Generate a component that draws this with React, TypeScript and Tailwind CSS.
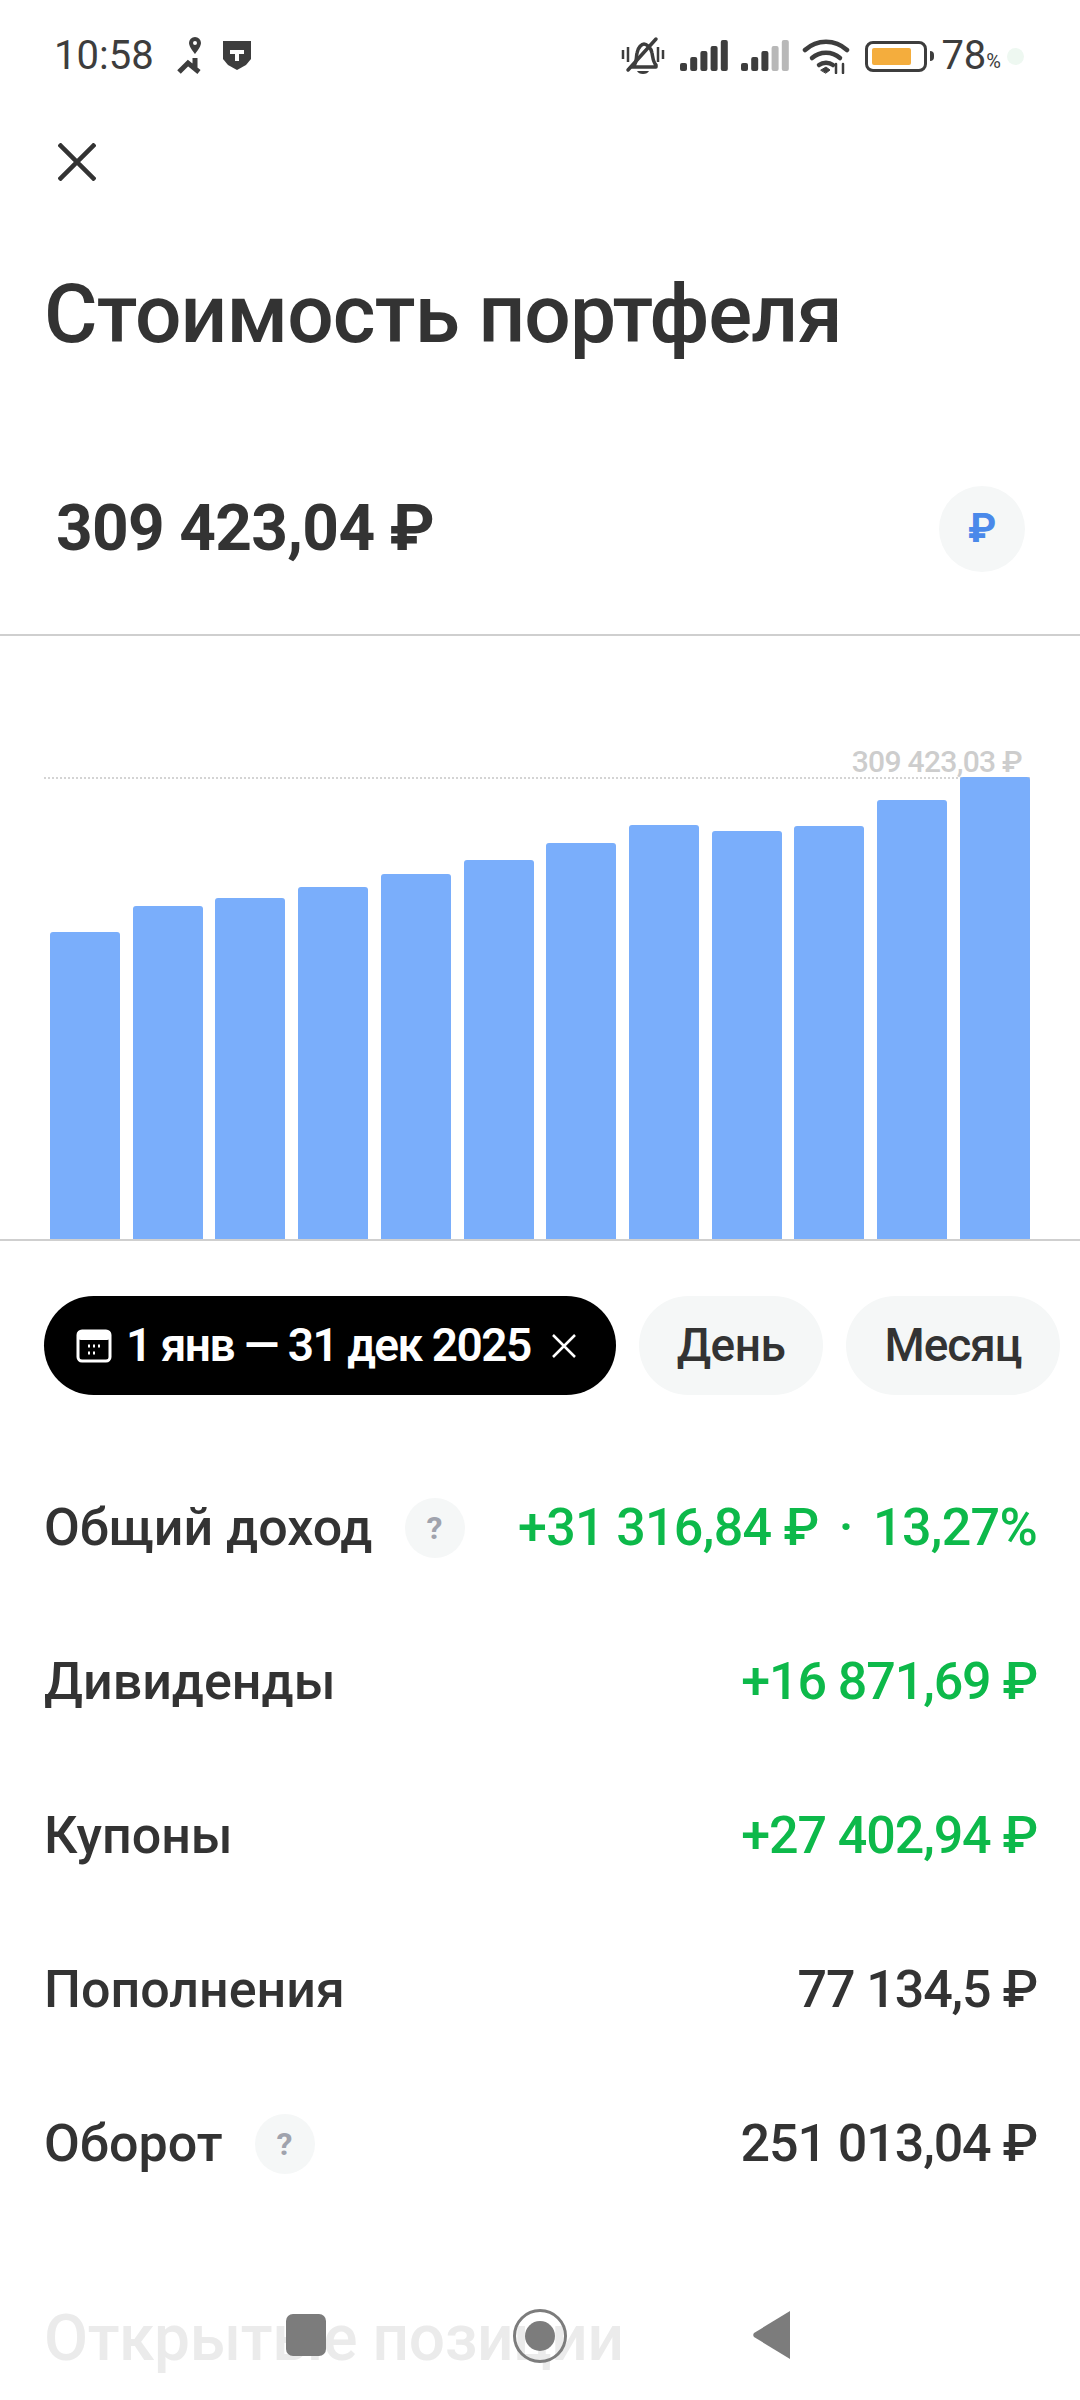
import type { ReactNode } from 'react';

const bars = [932, 906, 898, 887, 874, 860, 843, 825, 831, 826, 800, 777];
const BASE_Y = 1239;
const font = { fontFamily: 'Roboto, Inter, "Noto Sans", sans-serif' };

function Mute() {
  return (
    <svg width="46" height="40" viewBox="0 0 46 40" fill="none" stroke="#3d3d3d">
      <path d="M14 29c3-3 2-7 3-12 1-6 5-9 7-9s7 3 8 9c1 5 1 9 4 12v2H12z" strokeWidth="3.5" strokeLinejoin="round" />
      <path d="M8 34 36 3" strokeWidth="3.5" strokeLinecap="round" />
      <path d="M3 14v9M8 11v15M38 11v15M43 14v9" strokeWidth="2.5" />
      <path d="M17 35h12c-1 2-3 3-6 3s-5-1-6-3z" fill="#3d3d3d" stroke="none" />
    </svg>
  );
}

function Signal({ dim }: { dim?: boolean }) {
  const hs = [8, 14, 20, 25, 31];
  return (
    <svg width="48" height="32" viewBox="0 0 48 32">
      {hs.map((h, i) => (
        <rect key={i} x={i * 10.2} y={31 - h} width="7" height={h} rx="2" fill={dim && i > 2 ? '#b8b8b8' : '#3d3d3d'} />
      ))}
    </svg>
  );
}

function Wifi() {
  return (
    <svg width="48" height="36" viewBox="0 0 48 36" fill="none" stroke="#3d3d3d" strokeWidth="4.5" strokeLinecap="round">
      <path d="M3 12C15 1 33 1 45 12" />
      <path d="M10 20c8-7 20-7 28 0" />
      <path d="M17 27c4-3 10-3 14 0" />
      <path d="M19 32l5-3 4 3-4 3z" fill="#3d3d3d" strokeWidth="1" />
      <path d="M34 26v9M41 26v9" strokeWidth="2.5" />
    </svg>
  );
}

function Battery() {
  return (
    <div className="flex items-center gap-[3px]">
      <div className="flex h-[31px] w-[62px] items-center rounded-[8px] border-[3px] border-[#3d3d3d] p-[4px]">
        <div className="h-full w-[39px] rounded-[2px] bg-[#f4ad3d]" />
      </div>
      <div className="h-[10px] w-[4px] rounded-r-sm bg-[#3d3d3d]" />
    </div>
  );
}

function StatusBar() {
  return (
    <div className="flex h-[56px] items-center justify-between pl-[54px] pr-[56px] text-[#3d3d3d]">
      <div className="flex items-center">
        <span className="text-[40px] leading-none">10:58</span>
        <svg className="ml-[22px]" width="26" height="38" viewBox="0 0 26 38" fill="#3d3d3d">
          <path d="M19 0a6 6 0 0 1 6 6c0 4-6 11-6 11s-6-7-6-11a6 6 0 0 1 6-6zm0 4a2 2 0 1 0 0 4 2 2 0 0 0 0-4z" fillRule="evenodd" />
          <path d="M3 35l9-9 11 9M19 21v10" fill="none" stroke="#3d3d3d" strokeWidth="5" />
        </svg>
        <svg className="ml-[20px]" width="30" height="30" viewBox="0 0 30 30">
          <path d="M1 0h28v18l-5 6-9 5-9-5-5-6z" fill="#3d3d3d" />
          <path d="M8 9h14v4h-5v7h-4v-7H8z" fill="#fff" />
        </svg>
      </div>
      <div className="flex items-center">
        <Mute />
        <div className="ml-[14px]"><Signal /></div>
        <div className="ml-[13px]"><Signal dim /></div>
        <div className="ml-[13px]"><Wifi /></div>
        <div className="ml-[15px]"><Battery /></div>
        <span className="ml-[7px] text-[40px] leading-none">78</span>
        <span className="text-[20px] leading-none mt-[10px]">%</span>
        <div className="ml-[6px] h-[17px] w-[17px] rounded-full bg-[#eef8f1]" />
      </div>
    </div>
  );
}

function Hint({ className }: { className: string }) {
  return (
    <span className={`flex h-[60px] w-[60px] items-center justify-center rounded-full bg-[#f5f7f7] text-[32px] font-bold text-[#a0a3ad] ${className}`}>?</span>
  );
}

function Row({ label, value, green, hint, hintClass }: { label: string; value: ReactNode; green?: boolean; hint?: boolean; hintClass?: string }) {
  return (
    <div className="flex h-[154px] items-center justify-between">
      <div className="flex items-center">
        <span className="text-[52px] font-medium text-[#333333]">{label}</span>
        {hint && <Hint className={hintClass ?? ''} />}
      </div>
      <span className={`text-[52px] font-medium tracking-[-1.1px] ${green ? 'text-[#0db94a]' : 'text-[#333333]'}`}>{value}</span>
    </div>
  );
}

export default function App() {
  return (
    <div className="relative h-[2400px] w-[1080px] overflow-hidden bg-white" style={font}>
      <div className="pt-[28px]">
        <StatusBar />
      </div>
      <div className="pl-[58px] pt-[59px]">
        <svg width="38" height="38" viewBox="0 0 38 38" stroke="#333333" strokeWidth="4.5" fill="none">
          <path d="M1 1l36 36M37 1 1 37" />
        </svg>
      </div>
      <h1 className="mt-[88px] pl-[44px] text-[82px] leading-[90px] font-medium tracking-[-0.9px] text-[#333333]">Стоимость портфеля</h1>

      <div className="mt-[127px] flex h-[86px] items-center justify-between pl-[56px] pr-[55px]">
        <span className="text-[64px] font-bold tracking-[-0.7px] text-[#333333]">309 423,04 ₽</span>
        <span className="flex h-[86px] w-[86px] items-center justify-center rounded-full bg-[#f5f7f7] text-[40px] font-bold text-[#4a89ea]">₽</span>
      </div>

      <div className="mt-[62px] h-[2px] bg-[#cfcfcf]" />

      <div className="relative h-[605px] border-b-2 border-[#cfcfcf]">
        <span className="absolute right-[58px] top-[103px] text-[30px] font-medium tracking-[-0.7px] text-[#cdcdcd]">309 423,03 ₽</span>
        <div className="absolute left-[44px] right-[50px] top-[141px] border-t-2 border-dotted border-[#d4d4d4]" />
        <div className="absolute inset-x-[50px] bottom-0 flex items-end justify-between">
          {bars.map((top, i) => (
            <div key={i} className="w-[70px] rounded-t-[3px] bg-[#7aaefb]" style={{ height: BASE_Y - top }} />
          ))}
        </div>
      </div>

      <div className="mt-[55px] flex h-[99px] pl-[44px] gap-[23px]">
        <div className="flex w-[572px] items-center rounded-full bg-black pl-[32px] text-white">
          <svg width="36" height="36" viewBox="0 0 36 36" fill="none">
            <rect x="2" y="3" width="32" height="30" rx="4" stroke="#fff" strokeWidth="3" />
            <rect x="2" y="3" width="32" height="9" rx="3" fill="#fff" />
            <path d="M12 18h2M17 18h2M22 18h2M12 25h2M17 25h2" stroke="#fff" strokeWidth="3" />
          </svg>
          <span className="ml-[14px] text-[46px] font-semibold tracking-[-1.5px] whitespace-nowrap">1 янв — 31 дек 2025</span>
          <svg className="ml-[20px]" width="26" height="26" viewBox="0 0 26 26" stroke="#fff" strokeWidth="2.5" fill="none">
            <path d="M2 2l22 22M24 2 2 24" />
          </svg>
        </div>
        <div className="flex w-[184px] items-center justify-center rounded-full bg-[#f5f7f7] text-[46px] font-medium tracking-[-0.5px] text-[#333333]">День</div>
        <div className="flex w-[214px] items-center justify-center rounded-full bg-[#f5f7f7] text-[46px] font-medium tracking-[-1px] text-[#333333]">Месяц</div>
      </div>

      <div className="mt-[56px] pl-[44px] pr-[43px]">
        <Row label="Общий доход" value={<span className="tracking-[-0.7px]">+31 316,84 ₽<span className="mx-[8px]"> · </span>13,27%</span>} green hint hintClass="ml-[32px]" />
        <Row label="Дивиденды" value="+16 871,69 ₽" green />
        <Row label="Купоны" value="+27 402,94 ₽" green />
        <Row label="Пополнения" value="77 134,5 ₽" />
        <Row label="Оборот" value="251 013,04 ₽" hint hintClass="ml-[32px]" />
      </div>

      <h2 className="mt-[70px] pl-[44px] text-[64px] font-medium tracking-[-0.4px] text-[#ebebeb]">Открытые позиции</h2>

      <div className="absolute bottom-[44px] left-[286px] h-[42px] w-[40px] rounded-[7px] bg-[#7c7c7c]" />
      <div className="absolute bottom-[37px] left-[513px] flex h-[54px] w-[54px] items-center justify-center rounded-full border-[3px] border-[#7c7c7c]">
        <div className="h-[30px] w-[30px] rounded-full bg-[#7c7c7c]" />
      </div>
      <svg className="absolute bottom-[40px] left-[752px]" width="40" height="50" viewBox="0 0 40 50" fill="#7c7c7c">
        <path d="M38 1v48L2 27c-1-1-1-3 0-4z" />
      </svg>
    </div>
  );
}
